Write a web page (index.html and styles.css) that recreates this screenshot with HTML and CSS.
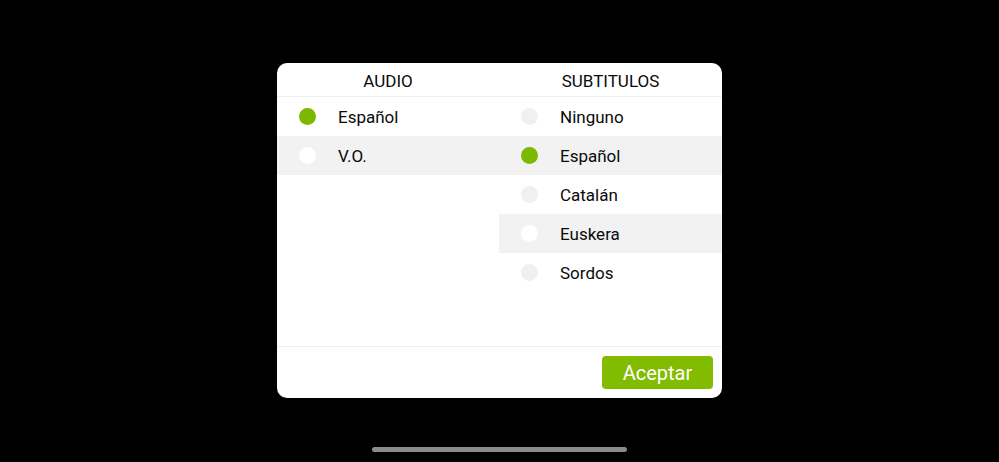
FILE: index.html
```html
<!DOCTYPE html>
<html lang="es">
<head>
    <meta charset="UTF-8">
    <meta name="viewport" content="width=device-width, initial-scale=1.0">
    <title>Audio y subtítulos</title>
    <link rel="stylesheet" href="styles.css">
</head>
<body>
    <div class="dialog">
        <div class="dialog-head">
            <div class="col-title">AUDIO</div>
            <div class="col-title">SUBTITULOS</div>
        </div>

        <div class="dialog-body">
            <div class="option-list">
                <div class="option"><span class="radio checked"></span>Español</div>
                <div class="option alt"><span class="radio"></span>V.O.</div>
            </div>
            <div class="option-list">
                <div class="option"><span class="radio"></span>Ninguno</div>
                <div class="option alt"><span class="radio checked"></span>Español</div>
                <div class="option"><span class="radio"></span>Catalán</div>
                <div class="option alt"><span class="radio"></span>Euskera</div>
                <div class="option"><span class="radio"></span>Sordos</div>
            </div>
        </div>

        <div class="dialog-foot">
            <button class="accept">Aceptar</button>
        </div>
    </div>

    <div class="home-bar"></div>
</body>
</html>
```

FILE: styles.css
```css
body {
    margin: 0;
    padding: 0;
    height: 462px;
    background-color: #000;
    font-family: Roboto, "Liberation Sans", sans-serif;
    display: flex;
    flex-direction: column;
    align-items: center;
    overflow: hidden;
}

.dialog {
    margin-top: 63px;
    width: 445px;
    background-color: #fff;
    border-radius: 10px;
    overflow: hidden;
    color: #0a0a0a;
}

.dialog-head,
.dialog-body {
    display: grid;
    grid-template-columns: 222px 1fr;
}

.dialog-head {
    height: 33px;
    border-bottom: 1px solid #f0f0f0;
}

.col-title {
    display: flex;
    align-items: center;
    justify-content: center;
    font-size: 17px;
    padding-top: 2px;
}

.dialog-body {
    height: 249px;
    border-bottom: 1px solid #f0f0f0;
}

.option {
    display: flex;
    align-items: center;
    height: 39px;
    font-size: 17px;
}

.option.alt {
    background-color: #f2f2f2;
}

.radio {
    width: 17px;
    height: 17px;
    border-radius: 50%;
    background-color: #f0f0f0;
    margin-left: 22px;
    margin-right: 22px;
}

.option.alt .radio {
    background-color: #fff;
}

.radio.checked,
.option.alt .radio.checked {
    background-color: #7cb800;
}

.dialog-foot {
    display: flex;
    justify-content: flex-end;
    padding: 9px;
}

.accept {
    width: 111px;
    height: 33px;
    border: none;
    border-radius: 4px;
    background-color: #82bc00;
    color: #fff;
    font-family: Roboto, "Liberation Sans", sans-serif;
    font-size: 20px;
    padding: 0;
    cursor: pointer;
}

.home-bar {
    margin-top: 49px;
    width: 255px;
    height: 5px;
    border-radius: 3px;
    background-color: #8a8a8a;
}
```
